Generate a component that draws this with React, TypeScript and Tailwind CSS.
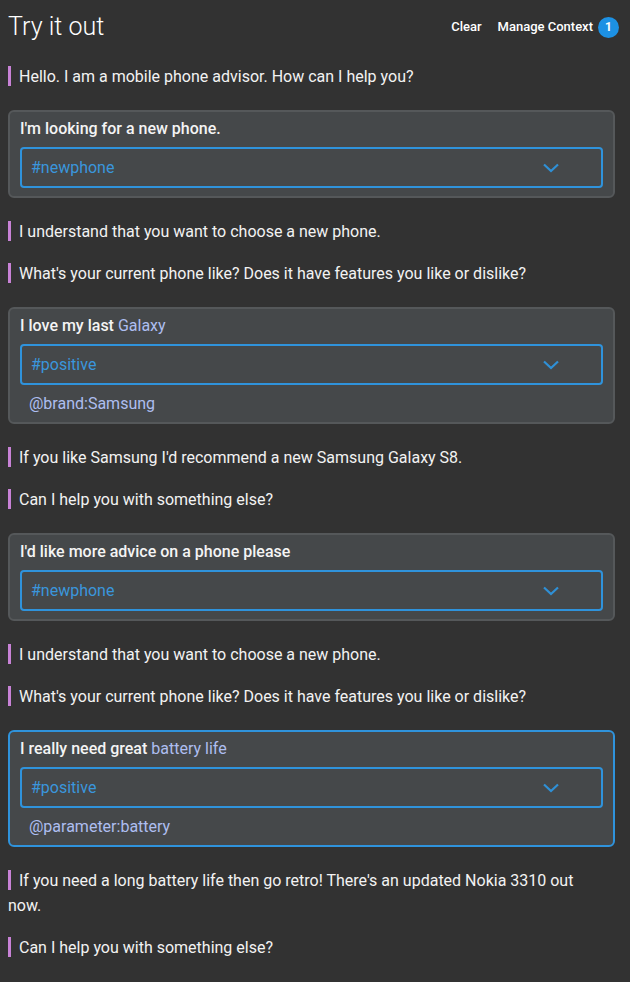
import React from "react";

const Bot = ({ children }: { children: React.ReactNode }) => (
  <div className="text-[16px] leading-[25px] text-[#f2f2f2] pr-[25px]">
    <span className="inline-block w-[3px] h-[20px] bg-[#c882d6] align-[-4px] mr-[8px]" />
    {children}
  </div>
);

const Chevron = () => (
  <svg width="20" height="12" viewBox="0 0 20 12" fill="none">
    <path d="M3 2.5 L10 9 L17 2.5" stroke="#2f90d6" strokeWidth="2.2" />
  </svg>
);

const UserCard = ({
  text,
  intent,
  entity,
  active,
}: {
  text: React.ReactNode;
  intent: string;
  entity?: string;
  active?: boolean;
}) => (
  <div
    className={`my-[4px] rounded-[6px] border-2 bg-[#45484a] px-[10px] pt-[4px] ${
      entity ? "pb-[6px]" : "pb-[8px]"
    } ${active ? "border-[#2f93dc]" : "border-[#55585a]"}`}
  >
    <div className="text-[16px] leading-[25px] font-medium text-[#f4f4f4]">{text}</div>
    <div className="mt-[6px] h-[41px] rounded-[4px] border-2 border-[#2f93dc] flex items-center justify-between pl-[9px] pr-[40px]">
      <span className="text-[16px] text-[#3a96dc]">{intent}</span>
      <Chevron />
    </div>
    {entity && (
      <div className="pl-[9px] mt-[6px] text-[16px] leading-[25px] text-[#aebef0]">{entity}</div>
    )}
  </div>
);

export default function App() {
  return (
    <div
      className="min-h-[982px] bg-[#323232] pl-[8px] pr-[15px]"
      style={{ fontFamily: "Roboto, 'Liberation Sans', sans-serif" }}
    >
      <div className="flex items-center justify-between h-[54px]">
        <div className="text-[25px] font-light text-white">Try it out</div>
        <div className="flex items-center text-[13px] font-medium text-white mr-[-4px]">
          <span className="mr-[16px]">Clear</span>
          <span className="mr-[5px]">Manage Context</span>
          <span className="w-[21px] h-[21px] rounded-full bg-[#1d91e4] flex items-center justify-center text-[12px] font-bold">
            1
          </span>
        </div>
      </div>
      <div className="flex flex-col gap-[17px] pt-[10px]">
        <Bot>Hello. I am a mobile phone advisor. How can I help you?</Bot>
        <UserCard text="I'm looking for a new phone." intent="#newphone" />
        <Bot>I understand that you want to choose a new phone.</Bot>
        <Bot>What's your current phone like? Does it have features you like or dislike?</Bot>
        <UserCard
          text={
            <>
              I love my last <span className="font-normal text-[#aebef0]">Galaxy</span>
            </>
          }
          intent="#positive"
          entity="@brand:Samsung"
        />
        <Bot>If you like Samsung I'd recommend a new Samsung Galaxy S8.</Bot>
        <Bot>Can I help you with something else?</Bot>
        <UserCard text="I'd like more advice on a phone please" intent="#newphone" />
        <Bot>I understand that you want to choose a new phone.</Bot>
        <Bot>What's your current phone like? Does it have features you like or dislike?</Bot>
        <UserCard
          active
          text={
            <>
              I really need great <span className="font-normal text-[#aebef0]">battery life</span>
            </>
          }
          intent="#positive"
          entity="@parameter:battery"
        />
        <Bot>If you need a long battery life then go retro! There's an updated Nokia 3310 out now.</Bot>
        <Bot>Can I help you with something else?</Bot>
      </div>
    </div>
  );
}
